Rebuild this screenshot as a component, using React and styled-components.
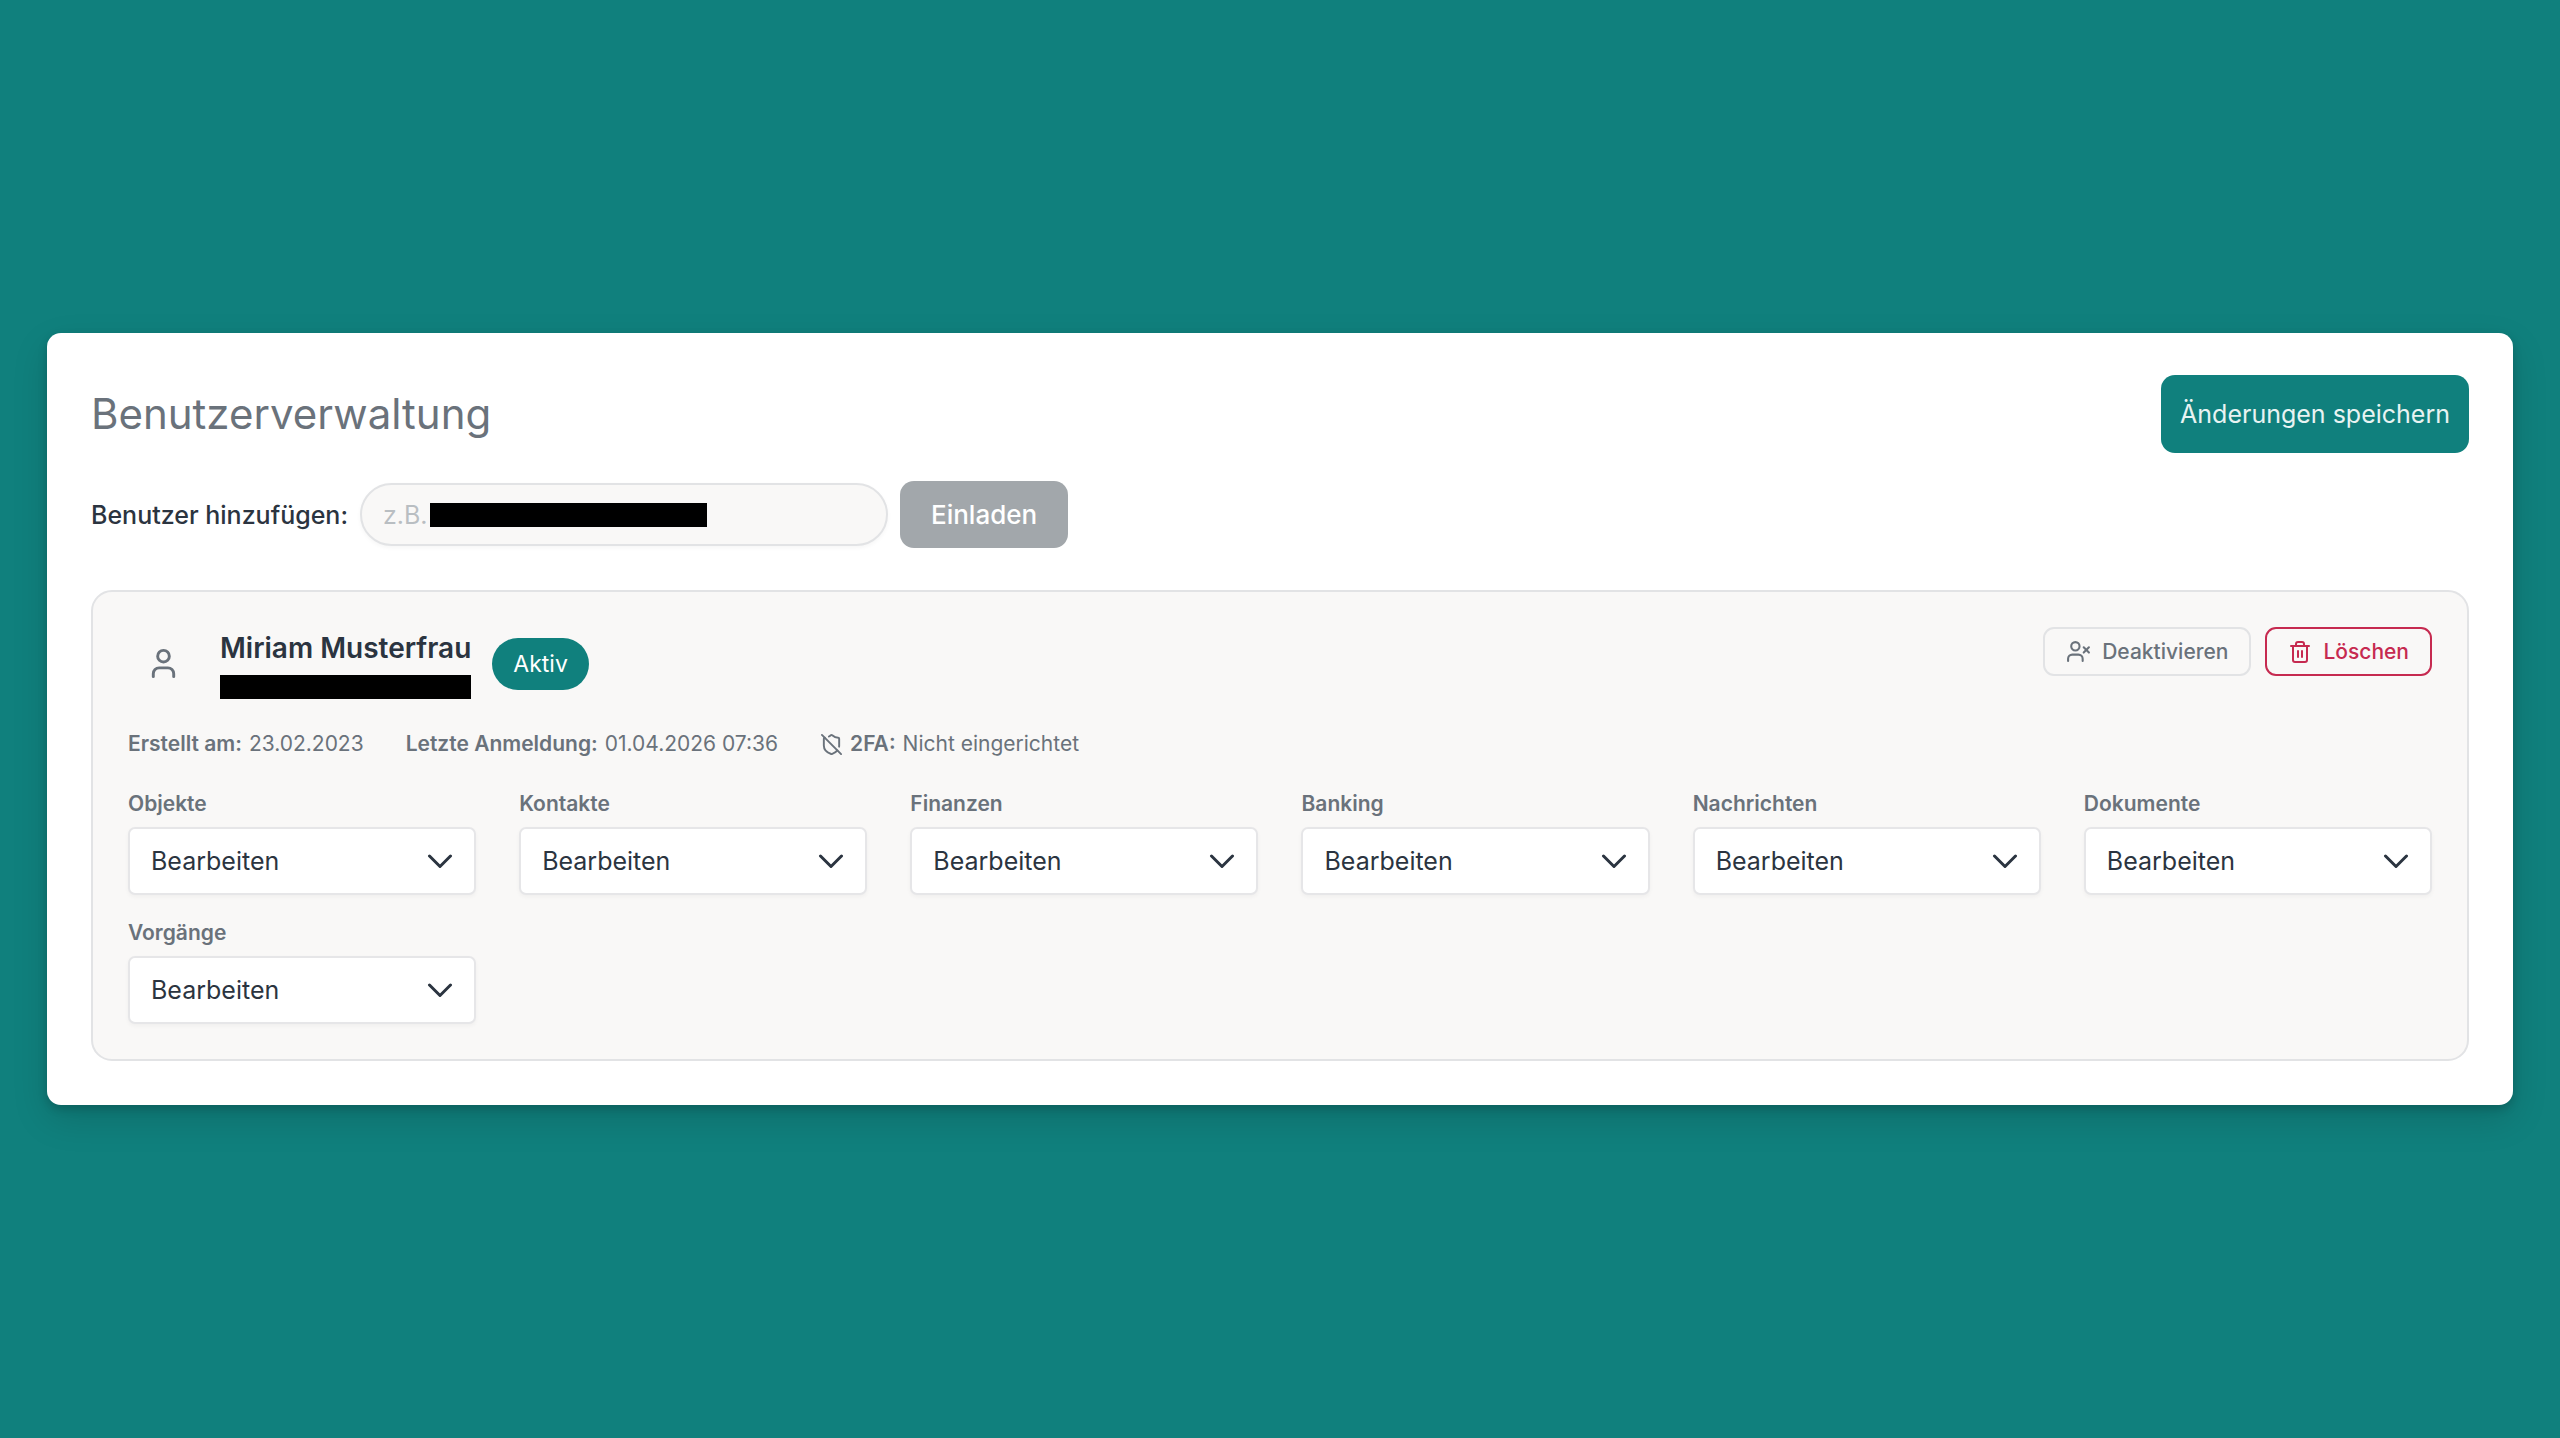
import React from "react";
import styled, { createGlobalStyle, css } from "styled-components";
import { ShieldOff, Trash2, User, UserX } from "lucide-react";

const GlobalStyle = createGlobalStyle`
  *, *::before, *::after {
    box-sizing: border-box;
  }
  body {
    margin: 0;
    background-color: #10807d;
    color: #2b3440;
    font-family: Inter, "Liberation Sans", sans-serif;
    font-size: 25px;
    line-height: 32px;
  }
  button, input, select {
    font-family: inherit;
  }
`;

const Page = styled.main`
  display: flex;
  flex-direction: column;
  justify-content: center;
  min-height: 100vh;
  padding: 47px;
`;

const Card = styled.section`
  display: flex;
  flex-direction: column;
  gap: 42px;
  padding: 42px 44px 44px;
  border-radius: 14px;
  background-color: #ffffff;
  box-shadow: 0 14px 36px rgba(0, 0, 0, 0.14), 0 4px 10px rgba(0, 0, 0, 0.16);
`;

const Top = styled.div`
  display: flex;
  flex-direction: column;
  gap: 28px;
`;

const Header = styled.header`
  display: flex;
  align-items: center;
  justify-content: space-between;
`;

const Title = styled.h1`
  margin: 0;
  color: #6a727b;
  font-size: 42px;
  font-weight: 400;
  line-height: 56px;
`;

const SaveButton = styled.button`
  height: 78px;
  padding: 0 19px;
  border: 0;
  border-radius: 14px;
  background-color: #10807d;
  color: #e8f3f2;
  font-size: 25px;
`;

const InviteForm = styled.form`
  display: flex;
  align-items: center;
  gap: 12px;
`;

const InviteLabel = styled.label`
  font-weight: 500;
`;

const InviteField = styled.div`
  position: relative;
  width: 528px;
`;

const InviteInput = styled.input`
  display: block;
  width: 100%;
  height: 63px;
  padding: 0 21px;
  border: 2px solid #e2e3e5;
  border-radius: 32px;
  background-color: #f9f8f7;
  color: #2b3440;
  font-size: 25px;
  box-shadow: 0 2px 4px rgba(0, 0, 0, 0.04);
  &::placeholder {
    color: #b9bec2;
    opacity: 1;
  }
`;

const InviteButton = styled.button`
  height: 67px;
  padding: 0 31px;
  border: 0;
  border-radius: 14px;
  background-color: #a2a7ab;
  color: #ffffff;
  font-size: 26px;
  font-weight: 500;
`;

const Redacted = styled.span`
  display: block;
  height: 24px;
  background-color: #000000;
  ${(props) =>
    props.$overlay &&
    css`
      position: absolute;
      top: 20px;
      left: 70px;
      width: 277px;
    `}
`;

const UserPanel = styled.article`
  display: flex;
  flex-direction: column;
  gap: 28px;
  padding: 35px;
  border: 2px solid #e2e3e5;
  border-radius: 21px;
  background-color: #f9f8f7;
`;

const UserHeader = styled.div`
  display: flex;
  align-items: flex-start;
  justify-content: space-between;
`;

const Identity = styled.div`
  display: flex;
  align-items: center;
  gap: 21px;
`;

const Avatar = styled.div`
  display: flex;
  align-items: center;
  justify-content: center;
  width: 71px;
  height: 73px;
  color: #6a727b;
`;

const NameBlock = styled.div`
  display: flex;
  flex-direction: column;
  gap: 7px;
`;

const UserName = styled.h2`
  margin: 0;
  font-size: 28px;
  font-weight: 600;
  line-height: 40px;
`;

const Badge = styled.span`
  padding: 10px 21px;
  border-radius: 27px;
  background-color: #10807d;
  color: #ffffff;
  font-size: 23px;
`;

const Actions = styled.div`
  display: flex;
  gap: 14px;
`;

const ActionButton = styled.button`
  display: flex;
  align-items: center;
  gap: 11px;
  height: 49px;
  padding: 0 21px;
  border: 2px solid ${(props) => (props.$danger ? "#c62a50" : "#e2e3e5")};
  border-radius: 11px;
  background-color: transparent;
  color: ${(props) => (props.$danger ? "#c62a50" : "#6a727b")};
  font-size: 21px;
  font-weight: 500;
`;

const Meta = styled.dl`
  display: flex;
  gap: 42px;
  margin: 0;
  color: #6a727b;
  font-size: 21px;
`;

const MetaItem = styled.div`
  display: flex;
  align-items: center;
  gap: 7px;
`;

const MetaTerm = styled.dt`
  font-weight: 600;
`;

const MetaValue = styled.dd`
  margin: 0;
`;

const Permissions = styled.div`
  display: grid;
  grid-template-columns: repeat(6, 1fr);
  gap: 22px 43px;
`;

const Field = styled.div`
  display: flex;
  flex-direction: column;
  gap: 7px;
`;

const FieldLabel = styled.label`
  color: #6a727b;
  font-size: 21px;
  font-weight: 600;
`;

const SelectWrap = styled.div`
  position: relative;
`;

const Select = styled.select`
  display: block;
  width: 100%;
  height: 68px;
  padding: 0 64px 0 21px;
  border: 2px solid #e6e6e8;
  border-radius: 7px;
  appearance: none;
  background-color: #ffffff;
  color: #2b3440;
  font-size: 25px;
  box-shadow: 0 2px 4px rgba(0, 0, 0, 0.04);
`;

const Chevron = styled.svg`
  position: absolute;
  top: 27px;
  right: 23px;
  width: 26px;
  height: 15px;
  pointer-events: none;
`;

const permissions = [
  "Objekte",
  "Kontakte",
  "Finanzen",
  "Banking",
  "Nachrichten",
  "Dokumente",
  "Vorgänge"
];

const PermissionSelect = ({ name }) => {
  const id = `permission-${name.toLowerCase()}`;
  return (
    <Field>
      <FieldLabel htmlFor={id}>{name}</FieldLabel>
      <SelectWrap>
        <Select id={id} defaultValue="edit">
          <option value="edit">Bearbeiten</option>
        </Select>
        <Chevron viewBox="0 0 26 15" fill="none" aria-hidden="true">
          <path
            d="M2.5 2L13 12.5L23.5 2"
            stroke="#2b3440"
            strokeWidth="3"
            strokeLinecap="round"
            strokeLinejoin="round"
          />
        </Chevron>
      </SelectWrap>
    </Field>
  );
};

const App = () => {
  const [email, setEmail] = React.useState("");
  const handleSubmit = (event) => event.preventDefault();

  return (
    <>
      <GlobalStyle />
      <Page>
        <Card>
          <Top>
            <Header>
              <Title>Benutzerverwaltung</Title>
              <SaveButton type="button">Änderungen speichern</SaveButton>
            </Header>
            <InviteForm onSubmit={handleSubmit}>
              <InviteLabel htmlFor="invite">Benutzer hinzufügen:</InviteLabel>
              <InviteField>
                <InviteInput
                  id="invite"
                  placeholder="z.B."
                  value={email}
                  onChange={(event) => setEmail(event.target.value)}
                />
                {email === "" && <Redacted $overlay />}
              </InviteField>
              <InviteButton type="submit">Einladen</InviteButton>
            </InviteForm>
          </Top>

          <UserPanel>
            <UserHeader>
              <Identity>
                <Avatar>
                  <User size={35} />
                </Avatar>
                <NameBlock>
                  <UserName>Miriam Musterfrau</UserName>
                  <Redacted />
                </NameBlock>
                <Badge>Aktiv</Badge>
              </Identity>
              <Actions>
                <ActionButton type="button">
                  <UserX size={25} />
                  Deaktivieren
                </ActionButton>
                <ActionButton type="button" $danger>
                  <Trash2 size={24} />
                  Löschen
                </ActionButton>
              </Actions>
            </UserHeader>

            <Meta>
              <MetaItem>
                <MetaTerm>Erstellt am:</MetaTerm>
                <MetaValue>23.02.2023</MetaValue>
              </MetaItem>
              <MetaItem>
                <MetaTerm>Letzte Anmeldung:</MetaTerm>
                <MetaValue>01.04.2026 07:36</MetaValue>
              </MetaItem>
              <MetaItem>
                <ShieldOff size={23} />
                <MetaTerm>2FA:</MetaTerm>
                <MetaValue>Nicht eingerichtet</MetaValue>
              </MetaItem>
            </Meta>

            <Permissions>
              {permissions.map((name) => (
                <PermissionSelect key={name} name={name} />
              ))}
            </Permissions>
          </UserPanel>
        </Card>
      </Page>
    </>
  );
};

export default App;
